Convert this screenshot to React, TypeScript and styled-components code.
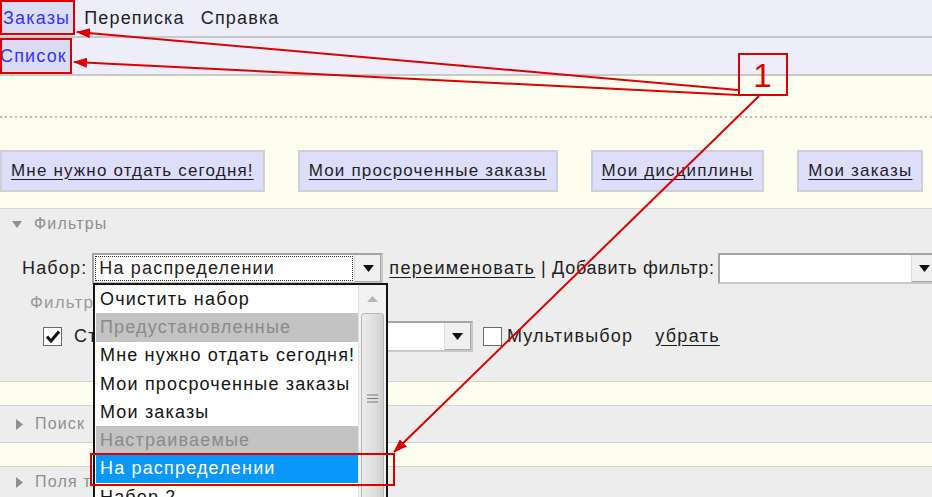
import React from 'react';
import styled, { createGlobalStyle } from 'styled-components';

const Global = createGlobalStyle`
  html, body { margin: 0; padding: 0; background: #fff; }
  body { font-family: "Liberation Sans", Arial, sans-serif; }
`;

const Page = styled.div`
  position: relative;
  width: 932px;
  height: 497px;
  overflow: hidden;
  background: #ededed;
  letter-spacing: 0.073em;
`;

const Bar = styled.div`
  height: 36px;
  background: #eeeefa;
  border-bottom: 2px solid #c8c8c8;
  display: flex;
  align-items: stretch;
  font-size: 18px;
`;

const BarItem = styled.div<{ $active?: boolean; $flush?: boolean }>`
  display: flex;
  align-items: center;
  padding: 0 ${p => (p.$active ? '3px' : '0')} 0 ${p => (p.$active && !p.$flush ? '3px' : '0')};
  margin-right: ${p => (p.$active ? '11px' : '16px')};
  color: ${p => (p.$active ? '#3434ff' : '#1e1e1e')};
  background: ${p => (p.$active ? '#dcdcf6' : 'transparent')};
`;

const YellowArea = styled.div`
  height: 132px;
  background: #fefef0;
  padding-top: 40px;
  box-sizing: border-box;
`;

const Dotted = styled.div`
  height: 2px;
  background-image: linear-gradient(to right, #bdbdbd 2px, transparent 2px);
  background-size: 5px 2px;
  margin-bottom: 32px;
`;

const QuickRow = styled.div`
  display: flex;
  gap: 33px;
`;

const QuickButton = styled.div`
  height: 42px;
  box-sizing: border-box;
  padding: 0 9px;
  display: flex;
  align-items: center;
  background: #dedefa;
  border: 2px solid #cfcfd8;
  font-size: 17px;
  color: #1e1e2a;
  text-decoration: underline;
  text-underline-offset: 3px;
  white-space: nowrap;
`;

const Section = styled.div`
  border-top: 1px solid #d6d6d6;
  background: #ededed;
`;

const SectionHeader = styled.div<{ $h: number }>`
  height: ${p => p.$h}px;
  display: flex;
  align-items: center;
  padding-left: 12px;
  gap: 12px;
  font-size: 16px;
  color: #8f8f8f;
`;

const Row = styled.div<{ $h: number; $pl: number; $mt?: number }>`
  height: ${p => p.$h}px;
  margin-top: ${p => p.$mt ?? 0}px;
  padding-left: ${p => p.$pl}px;
  display: flex;
  align-items: center;
  font-size: 18px;
  color: #1e1e1e;
  white-space: nowrap;
`;

const Gap = styled.span<{ $l: number; $tight?: boolean }>`
  margin-left: ${p => p.$l}px;
  display: flex;
  align-items: center;
  letter-spacing: ${p => (p.$tight ? '0.04em' : 'inherit')};
`;

const Gray = styled.span`
  color: #9a9a9a;
  font-size: 17px;
`;

const Link = styled.span`
  text-decoration: underline;
  text-underline-offset: 3px;
  letter-spacing: 0.073em;
`;

const Select = styled.div<{ $w: number }>`
  width: ${p => p.$w}px;
  height: 31px;
  box-sizing: border-box;
  border: 2px solid #a4a4a4;
  border-right-color: #c8c8c8;
  border-bottom-color: #c8c8c8;
  background: #fff;
  display: flex;
  align-items: stretch;
  font-size: 18px;
`;

const SelectText = styled.div<{ $focus?: boolean }>`
  flex: 1;
  display: flex;
  align-items: center;
  padding-left: 4px;
  margin: 1px;
  outline: ${p => (p.$focus ? '1px dotted #333' : 'none')};
  outline-offset: -1px;
  overflow: hidden;
  white-space: nowrap;
`;

const SelectButton = styled.div`
  width: 26px;
  background: #f0f0f0;
  border-left: 1px solid #dcdcdc;
  box-shadow: inset -1px -1px 0 #a8a8a8;
  display: flex;
  align-items: center;
  justify-content: center;
`;

const Check = styled.div`
  width: 19px;
  height: 19px;
  box-sizing: border-box;
  border: 1px solid #6a6a6a;
  background: #fff;
  display: flex;
  align-items: center;
  justify-content: center;
`;

const Band = styled.div<{ $h: number }>`
  height: ${p => p.$h}px;
  background: #fefef0;
  border-top: 1px solid #d2d2d2;
  border-bottom: 1px solid #d2d2d2;
`;

const Collapsed = styled.div<{ $h: number }>`
  height: ${p => p.$h}px;
  display: flex;
  align-items: center;
  padding-left: 16px;
  gap: 12px;
  font-size: 16px;
  color: #8f8f8f;
`;

const DropList = styled.div`
  position: absolute;
  left: 93px;
  top: 283px;
  width: 295px;
  height: 240px;
  box-sizing: border-box;
  border: 2px solid #141414;
  background: #fff;
  display: flex;
`;

const Options = styled.div`
  flex: 1;
  padding-left: 1px;
  overflow: hidden;
`;

const Option = styled.div<{ $kind?: 'group' | 'sel' }>`
  height: 28.3px;
  display: flex;
  align-items: center;
  padding-left: 4px;
  font-size: 18px;
  white-space: nowrap;
  overflow: hidden;
  color: ${p => (p.$kind === 'group' ? '#8a8a8a' : p.$kind === 'sel' ? '#fff' : '#141414')};
  background: ${p => (p.$kind === 'group' ? '#c3c3c3' : p.$kind === 'sel' ? '#0a97fb' : '#fff')};
`;

const ScrollBar = styled.div`
  width: 27px;
  background: #f2f2f2;
  border-left: 1px solid #e2e2e2;
  display: flex;
  flex-direction: column;
`;

const ScrollArrow = styled.div`
  height: 28px;
  display: flex;
  align-items: center;
  justify-content: center;
`;

const Thumb = styled.div`
  flex: 1;
  margin: 0 2px;
  border: 1px solid #b8b8b8;
  border-radius: 3px 3px 0 0;
  background: linear-gradient(to right, #ececec, #dedede 60%, #cfcfcf);
  display: flex;
  justify-content: center;
  padding-top: 80px;
`;

const Overlay = styled.svg`
  position: absolute;
  left: 0;
  top: 0;
  pointer-events: none;
`;

const Triangle = ({ dir }: { dir: 'down' | 'right' }) =>
  dir === 'down' ? (
    <svg width="10" height="7" viewBox="0 0 10 7"><path d="M0 0H10L5 7Z" fill="#8f8f8f" /></svg>
  ) : (
    <svg width="7" height="11" viewBox="0 0 7 11"><path d="M0 0L7 5.5L0 11Z" fill="#8f8f8f" /></svg>
  );

const Caret = () => (
  <svg width="11" height="7" viewBox="0 0 11 7"><path d="M0 0H11L5.5 7Z" fill="#111" /></svg>
);

const buttons = ['Мне нужно отдать сегодня!', 'Мои просроченные заказы', 'Мои дисциплины', 'Мои заказы'];

const options: { t: string; k?: 'group' | 'sel' }[] = [
  { t: 'Очистить набор' },
  { t: 'Предустановленные', k: 'group' },
  { t: 'Мне нужно отдать сегодня!' },
  { t: 'Мои просроченные заказы' },
  { t: 'Мои заказы' },
  { t: 'Настраиваемые', k: 'group' },
  { t: 'На распределении', k: 'sel' },
  { t: 'Набор 2' },
];

export default function App() {
  return (
    <Page>
      <Global />
      <Bar>
        <BarItem $active>Заказы</BarItem>
        <BarItem>Переписка</BarItem>
        <BarItem>Справка</BarItem>
      </Bar>
      <Bar>
        <BarItem $active $flush>Список</BarItem>
      </Bar>
      <YellowArea>
        <Dotted />
        <QuickRow>
          {buttons.map(b => (
            <QuickButton key={b}>{b}</QuickButton>
          ))}
        </QuickRow>
      </YellowArea>
      <Section>
        <SectionHeader $h={30}>
          <Triangle dir="down" />
          <span>Фильтры</span>
        </SectionHeader>
        <Row $h={32} $pl={22} $mt={13}>
          <span>Набор:</span>
          <Gap $l={5}>
            <Select $w={291}>
              <SelectText $focus>На распределении</SelectText>
              <SelectButton><Caret /></SelectButton>
            </Select>
          </Gap>
          <Gap $l={6} $tight>
            <Link>переименовать</Link>&nbsp;| Добавить фильтр:
          </Gap>
          <Gap $l={3}>
            <Select $w={222}>
              <SelectText />
              <SelectButton><Caret /></SelectButton>
            </Select>
          </Gap>
        </Row>
        <Row $h={38} $pl={30}>
          <Gray>Фильтр по статусу</Gray>
        </Row>
        <Row $h={28} $pl={43}>
          <Check>
            <svg width="14" height="13" viewBox="0 0 14 13"><path d="M1 6.5L5 11L13 1.5" stroke="#111" strokeWidth="3" fill="none" /></svg>
          </Check>
          <Gap $l={12}>Статус</Gap>
          <Gap $l={60}>
            <Select $w={275}>
              <SelectText>На распределении</SelectText>
              <SelectButton><Caret /></SelectButton>
            </Select>
          </Gap>
          <Gap $l={10}><Check /></Gap>
          <Gap $l={5}>Мультивыбор</Gap>
          <Gap $l={22}><Link>убрать</Link></Gap>
        </Row>
        <div style={{ height: 31 }} />
      </Section>
      <Band $h={23} />
      <Collapsed $h={36}>
        <Triangle dir="right" />
        <span>Поиск</span>
      </Collapsed>
      <Band $h={23} />
      <Collapsed $h={30}>
        <Triangle dir="right" />
        <span>Поля таблицы</span>
      </Collapsed>

      <DropList>
        <Options>
          {options.map(o => (
            <Option key={o.t} $kind={o.k}>{o.t}</Option>
          ))}
        </Options>
        <ScrollBar>
          <ScrollArrow>
            <svg width="11" height="6" viewBox="0 0 11 6"><path d="M0 6L5.5 0L11 6Z" fill="#b4b4b4" /></svg>
          </ScrollArrow>
          <Thumb>
            <svg width="11" height="9" viewBox="0 0 11 9">
              <path d="M0 1H11M0 4.5H11M0 8H11" stroke="#7a7a7a" strokeWidth="1.2" />
            </svg>
          </Thumb>
        </ScrollBar>
      </DropList>

      <Overlay width="932" height="497" viewBox="0 0 932 497">
        <defs>
          <marker id="ah" markerWidth="14" markerHeight="10" refX="13" refY="5" orient="auto" markerUnits="userSpaceOnUse">
            <path d="M0 0L14 5L0 10Z" fill="#dd0000" />
          </marker>
        </defs>
        <g fill="none" stroke="#dd0000" strokeWidth="2">
          <rect x="1" y="1" width="73" height="33" />
          <rect x="1" y="39" width="70" height="34" />
          <rect x="739" y="54" width="48" height="41" />
          <rect x="91" y="454" width="303" height="31" />
          <line x1="738" y1="90" x2="77" y2="32" markerEnd="url(#ah)" />
          <line x1="738" y1="95" x2="74" y2="62" markerEnd="url(#ah)" />
          <line x1="759" y1="96" x2="394" y2="452" markerEnd="url(#ah)" />
        </g>
        <text x="763" y="87" textAnchor="middle" fontSize="33" fill="#dd0000" fontFamily="Liberation Sans, Arial, sans-serif">1</text>
      </Overlay>
    </Page>
  );
}
